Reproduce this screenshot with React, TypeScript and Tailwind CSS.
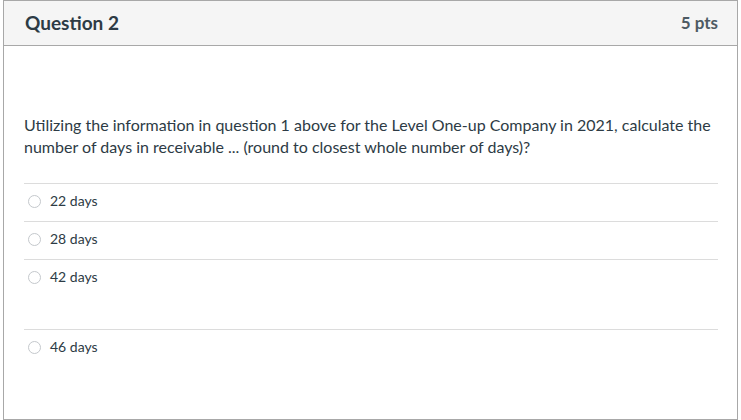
const answers = [
  { label: "22 days", tall: false },
  { label: "28 days", tall: false },
  { label: "42 days", tall: true },
  { label: "46 days", tall: false },
];

function Radio() {
  return (
    <span className="inline-block h-[13px] w-[13px] shrink-0 rounded-full border border-[#c4c8cc] bg-white" />
  );
}

export default function App() {
  return (
    <div className="h-[420px] w-[741px] bg-white font-['Lato','Liberation_Sans',sans-serif] text-[#2d3b45]">
      <div className="ml-[3px] flex h-[420px] w-[735px] flex-col border border-[#a8a8a8]">
        <div className="flex h-[45px] shrink-0 items-center justify-between border-b border-[#a8a8a8] bg-[#f5f5f5] pl-[21px] pr-[19px]">
          <div className="text-[19px] font-bold">Question 2</div>
          <div className="text-[17px] font-bold text-[#4d5a63]">5 pts</div>
        </div>

        <div className="pl-[20px] pr-[19px] pt-[68px]">
          <p className="text-[16px] leading-[22px]">
            Utilizing the information in question 1 above for the Level One-up Company in 2021, calculate the
            number of days in receivable ... (round to closest whole number of days)?
          </p>

          <div className="mt-[25px]">
            {answers.map((a) => (
              <div
                key={a.label}
                className={`flex items-start gap-[9px] border-t border-[#dcdcdc] pl-[4px] pt-[7px] ${a.tall ? "pb-[42px]" : "pb-[10px]"}`}
              >
                <span className="flex h-5 items-center">
                  <Radio />
                </span>
                <span className="text-[14px] leading-5">{a.label}</span>
              </div>
            ))}
          </div>
        </div>
      </div>
    </div>
  );
}
